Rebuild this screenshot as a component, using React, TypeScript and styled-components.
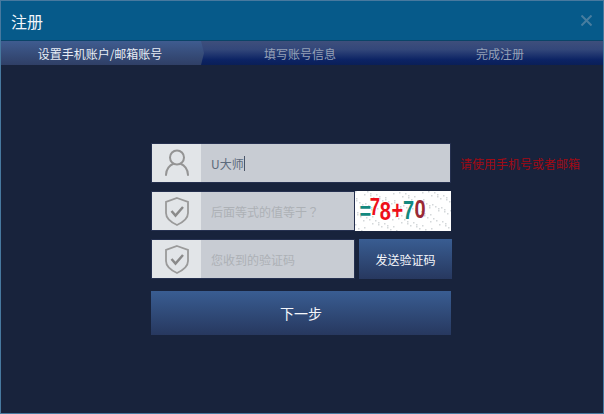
import React from "react";
import styled, { createGlobalStyle } from "styled-components";

const GlobalStyle = createGlobalStyle`
  html, body {
    margin: 0;
    padding: 0;
    background: #18233c;
  }
  * {
    box-sizing: border-box;
  }
`;

const Window = styled.div`
  width: 604px;
  height: 414px;
  display: flex;
  flex-direction: column;
  background: #18233c;
  border: 1px solid #47799f;
  font-family: "Noto Sans CJK SC", "Noto Sans", sans-serif;
  font-size: 12px;
`;

const TitleBar = styled.div`
  height: 40px;
  flex: none;
  display: flex;
  align-items: center;
  justify-content: space-between;
  padding: 0 11px 0 10px;
  background: #065a8a;
  border-bottom: 1px solid #0a4468;
`;

const Title = styled.div`
  color: #f2f6fa;
  font-size: 16px;
  line-height: 20px;
`;

const CloseButton = styled.svg`
  width: 11px;
  height: 11px;
  display: block;
`;

const Tabs = styled.div`
  height: 24px;
  flex: none;
  display: grid;
  grid-template-columns: repeat(3, 200px);
  background: linear-gradient(#3e4f7c 0%, #33477a 35%, #0c2364 78%, #0a1f57 100%);
`;

const Tab = styled.div<{ $active?: boolean }>`
  display: flex;
  align-items: center;
  justify-content: center;
  height: 24px;
  color: ${(p) => (p.$active ? "#e8edf5" : "#95a1b7")};
  background: ${(p) => (p.$active ? "linear-gradient(#3f5c90, #2f3f66)" : "transparent")};
  clip-path: ${(p) =>
    p.$active ? "polygon(0 0, 200px 0, 203px 50%, 200px 100%, 0 100%)" : "none"};
  width: ${(p) => (p.$active ? "204px" : "auto")};
  padding-right: ${(p) => (p.$active ? "6px" : "2px")};
`;

const Body = styled.div`
  flex: 1;
  padding: 78px 0 0 150px;
`;

const Form = styled.div`
  width: 300px;
  display: flex;
  flex-direction: column;
  gap: 8px;
`;

const Row = styled.div`
  display: flex;
  height: 40px;
  align-items: stretch;
`;

const Field = styled.div<{ $narrow?: boolean }>`
  width: ${(p) => (p.$narrow ? "204px" : "300px")};
  flex: none;
  display: flex;
  border: 1px solid #25304f;
  background: #c8ccd3;
`;

const IconCell = styled.div`
  width: 49px;
  flex: none;
  display: flex;
  align-items: center;
  justify-content: center;
  background: #e2e5e8;
`;

const FieldText = styled.div<{ $placeholder?: boolean }>`
  display: flex;
  align-items: center;
  padding-left: 10px;
  color: ${(p) => (p.$placeholder ? "#adb1b6" : "#5d6b7c")};
`;

const FullWidthMark = styled.span`
  font-family: "Noto Sans CJK TC", sans-serif;
`;

const Caret = styled.span`
  display: inline-block;
  width: 1px;
  height: 15px;
  background: #4a5568;
`;

const Hint = styled.div`
  flex: none;
  width: 130px;
  padding-left: 9px;
  display: flex;
  align-items: center;
  color: #a00a14;
  white-space: nowrap;
`;

const Captcha = styled.svg`
  width: 96px;
  height: 40px;
  display: block;
  flex: none;
`;

const SendButton = styled.div`
  width: 93px;
  margin-left: 4px;
  margin-right: -1px;
  flex: none;
  display: flex;
  align-items: center;
  justify-content: center;
  color: #f5f7fb;
  background: linear-gradient(#395d92, #27385f);
`;

const NextButton = styled.div`
  height: 44px;
  margin-top: 4px;
  display: flex;
  align-items: center;
  justify-content: center;
  color: #f5f7fb;
  font-size: 14px;
  background: linear-gradient(#395d92, #27385f);
`;

const UserIcon = () => (
  <svg width="26" height="28" viewBox="0 0 26 28" fill="none" stroke="#949494" strokeWidth="2">
    <circle cx="13" cy="8.5" r="7" />
    <path d="M2 26c0-6 4-10 7-11M24 26c0-6-4-10-7-11" strokeLinecap="round" />
  </svg>
);

const ShieldIcon = () => (
  <svg width="24" height="29" viewBox="0 0 24 29" fill="none">
    <path
      d="M12 1 23 5v11c0 5-4.500 9-11 12C5.500 25 1 21 1 16V5Z"
      stroke="#9a9a9a"
      strokeWidth="1.800"
    />
    <path d="M6.500 14l4 4.500 7.500-8.500" stroke="#8a8a8a" strokeWidth="2.500" />
  </svg>
);

// speckle of the captcha image
const dots = Array.from({ length: 130 }, (_, i) => ({
  x: (i * 37) % 96,
  y: (i * 23 + (i % 7) * 5) % 40,
}));

// x is in the squeezed space of the text group (scale .8)
const glyphs = [
  { c: "=", x: 5.5, y: 29, size: 25, fill: "#12897f" },
  { c: "7", x: 18.5, y: 24, size: 23, fill: "#ee0f1a" },
  { c: "8", x: 31, y: 29, size: 25, fill: "#ee0f1a" },
  { c: "+", x: 45.5, y: 28, size: 25, fill: "#ee0f1a" },
  { c: "7", x: 60, y: 28, size: 25, fill: "#12897f" },
  { c: "0", x: 74.5, y: 27, size: 25, fill: "#9a2a35" },
];

const CaptchaImage = () => (
  <Captcha viewBox="0 0 96 40">
    <rect width="96" height="40" fill="#fff" />
    {dots.map((d, i) => (
      <rect key={i} x={d.x} y={d.y} width="1.500" height="1.500" fill="#d4d8da" />
    ))}
    <text
      transform="scale(.8 1)"
      fontFamily="'Liberation Sans', sans-serif"
      fontWeight="700"
    >
      {glyphs.map((g, i) => (
        <tspan key={i} x={g.x} y={g.y} fontSize={g.size} fill={g.fill}>
          {g.c}
        </tspan>
      ))}
    </text>
  </Captcha>
);

const App: React.FC = () => {
  return (
    <>
      <GlobalStyle />
      <Window>
        <TitleBar>
          <Title>注册</Title>
          <CloseButton viewBox="0 0 11 11" stroke="#477d9f" strokeWidth="2">
            <path d="M.5.500l10 10M10.500.500l-10 10" />
          </CloseButton>
        </TitleBar>
        <Tabs>
          <Tab $active>设置手机账户/邮箱账号</Tab>
          <Tab>填写账号信息</Tab>
          <Tab>完成注册</Tab>
        </Tabs>
        <Body>
          <Form>
            <Row>
              <Field>
                <IconCell>
                  <UserIcon />
                </IconCell>
                <FieldText>
                  U大师
                  <Caret />
                </FieldText>
              </Field>
              <Hint>请使用手机号或者邮箱</Hint>
            </Row>
            <Row>
              <Field $narrow>
                <IconCell>
                  <ShieldIcon />
                </IconCell>
                <FieldText $placeholder>
                  后面等式的值等于<FullWidthMark>？</FullWidthMark>
                </FieldText>
              </Field>
              <CaptchaImage />
            </Row>
            <Row>
              <Field $narrow>
                <IconCell>
                  <ShieldIcon />
                </IconCell>
                <FieldText $placeholder>您收到的验证码</FieldText>
              </Field>
              <SendButton>发送验证码</SendButton>
            </Row>
            <NextButton>下一步</NextButton>
          </Form>
        </Body>
      </Window>
    </>
  );
};

export default App;
